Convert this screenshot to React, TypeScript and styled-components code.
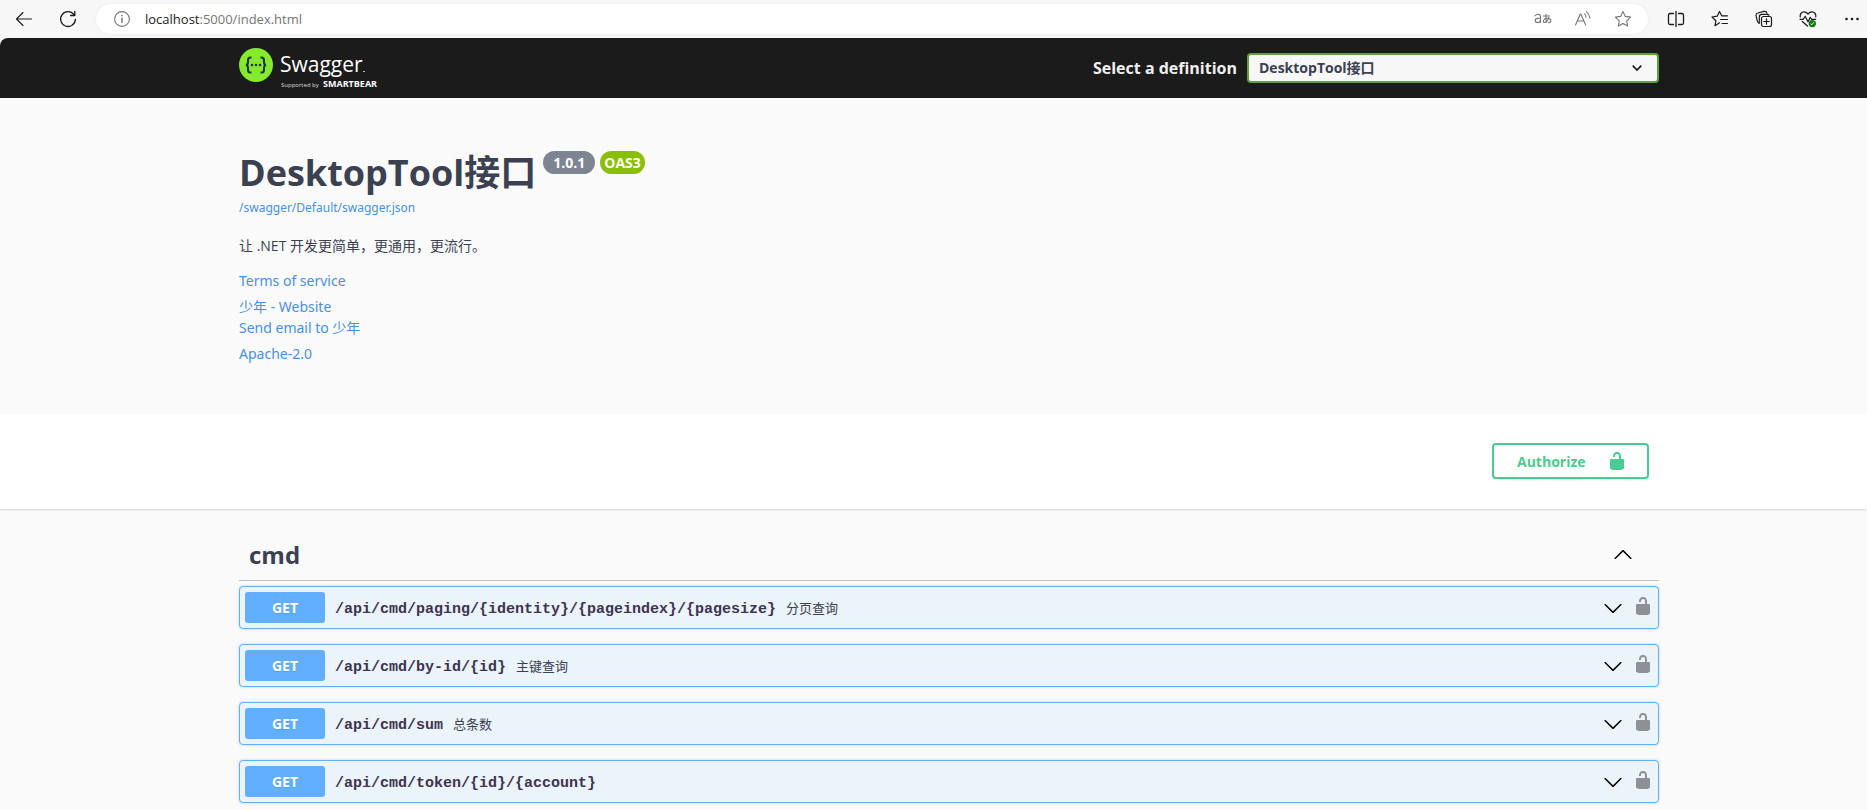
import React from 'react';
import styled, { createGlobalStyle } from 'styled-components';

const sans = `"Open Sans", "Noto Sans", "Noto Sans CJK SC", sans-serif`;
const wideSans = `"Noto Sans", "Noto Sans CJK SC", sans-serif`;
const mono = `"Liberation Mono", "Noto Sans CJK SC", monospace`;
const ink = '#3b4151';

const GlobalStyle = createGlobalStyle`
  *, *::before, *::after { box-sizing: border-box; }
  body { margin: 0; background: #fafafa; color: ${ink}; font-family: ${sans}; font-size: 14px; overflow-x: hidden; }
  a { color: #4990e2; text-decoration: none; }
  button, select, input { font: inherit; }
`;

/* Browser chrome */

const BrowserBar = styled.header`
  display: flex;
  align-items: center;
  height: 38px;
  padding: 0 3px 0 12px;
  background: #f7f7f7;
`;

const ToolButton = styled.button<{ $gap?: number }>`
  display: grid;
  place-items: center;
  flex: none;
  width: 24px;
  height: 24px;
  margin: 0 0 0 ${p => p.$gap ?? 20}px;
  padding: 0;
  border: 0;
  background: none;
  color: #1b1b1b;
`;

const AddressBar = styled.div`
  display: flex;
  align-items: center;
  flex: 1;
  min-width: 0;
  height: 30px;
  margin-left: 16px;
  padding: 0 13px 0 14px;
  border-radius: 15px;
  background: #fff;
  box-shadow: 0 0 3px rgba(0, 0, 0, 0.06);

  ${ToolButton} { color: #767676; }
`;

const Address = styled.div`
  flex: 1;
  margin-left: 11px;
  font-size: 13px;
  line-height: 20px;
  color: #767676;
  white-space: nowrap;
`;

const Host = styled.span`
  color: #1b1b1b;
`;

/* Page */

const Column = styled.div`
  display: grid;
  grid-template-columns: minmax(20px, 239fr) minmax(0, 1420px) minmax(20px, 208fr);

  & > * { grid-column: 2; }
`;

const TopbarBack = styled.div`
  background: #f7f7f7;
`;

const Topbar = styled(Column)`
  background: #1b1b1b;
  border-top-left-radius: 8px;
`;

const TopbarRow = styled.div`
  display: flex;
  align-items: center;
  justify-content: space-between;
  height: 60px;
`;

const LogoLink = styled.a`
  display: flex;
`;

const Definition = styled.label`
  display: flex;
  align-items: center;
  gap: 10px;
  color: #f0f0f0;
  font-size: 16px;
  font-weight: 700;
`;

const SelectBox = styled.span`
  display: grid;
  align-items: center;
  width: 412px;

  & > * { grid-area: 1 / 1; }
  svg { justify-self: end; margin-right: 15px; pointer-events: none; color: #1b1b1b; }
`;

const Select = styled.select`
  width: 100%;
  height: 30px;
  padding: 0 40px 2px 10px;
  border: 2px solid #62a03f;
  border-radius: 4px;
  background: #f7f7f7;
  color: ${ink};
  font-size: 14px;
  font-weight: 700;
  appearance: none;
`;

const Info = styled.div`
  display: flex;
  flex-direction: column;
  align-items: flex-start;
  padding: 50px 0 45px;
`;

const TitleRow = styled.div`
  display: flex;
  align-items: flex-start;
  gap: 5px;
`;

const Title = styled.h1`
  margin: 0 2px 0 0;
  font-size: 36px;
  line-height: 50px;
  font-weight: 700;
`;

const Badge = styled.span<{ $color: string; $pad: number }>`
  margin-top: 3px;
  padding: 0 ${p => p.$pad}px;
  border-radius: 12px;
  background: ${p => p.$color};
  color: #fff;
  font-size: 14px;
  line-height: 23px;
  font-weight: 700;
`;

const SpecLink = styled.a`
  font-family: ${wideSans};
  font-size: 12px;
  line-height: 19px;
`;

const Description = styled.p`
  margin: 18px 0 14px;
  line-height: 21px;
`;

const InfoLink = styled.a<{ $tight?: boolean }>`
  margin-bottom: ${p => (p.$tight ? 0 : 5)}px;
  font-family: ${wideSans};
  line-height: 21px;
`;

const Schemes = styled(Column)`
  background: #fff;
  box-shadow: 0 1px 2px rgba(0, 0, 0, 0.15);
`;

const SchemesRow = styled.div`
  display: flex;
  justify-content: flex-end;
  padding: 29px 10px 30px;
`;

const Authorize = styled.button`
  display: flex;
  align-items: center;
  justify-content: space-between;
  width: 157px;
  height: 36px;
  padding: 0 20px 0 23px;
  border: 2px solid #49cc90;
  border-radius: 4px;
  background: transparent;
  box-shadow: 0 1px 2px rgba(0, 0, 0, 0.1);
  color: #49cc90;
  font-size: 14px;
  font-weight: 700;
`;

const TagHead = styled.div`
  display: flex;
  align-items: center;
  justify-content: space-between;
  height: 52px;
  margin: 20px 0 5px;
  padding: 0 26px 0 10px;
  border-bottom: 1px solid rgba(59, 65, 81, 0.3);
`;

const TagName = styled.h2`
  margin: 0;
  font-size: 24px;
  line-height: 34px;
  font-weight: 700;
`;

const IconButton = styled.button`
  display: grid;
  place-items: center;
  padding: 0;
  border: 0;
  background: none;
  color: #000;
`;

const Operations = styled.ul`
  display: flex;
  flex-direction: column;
  gap: 15px;
  margin: 0;
  padding: 0 0 7px;
  list-style: none;
`;

const Operation = styled.li`
  display: flex;
  align-items: center;
  gap: 10px;
  height: 43px;
  padding: 0 5px;
  border: 1px solid #61affe;
  border-radius: 4px;
  background: #ebf3fb;
  box-shadow: 0 0 3px rgba(0, 0, 0, 0.19);
`;

const Method = styled.button`
  width: 80px;
  height: 31px;
  padding: 0;
  border: 0;
  border-radius: 3px;
  background: #61affe;
  color: #fff;
  font-size: 14px;
  font-weight: 700;
  text-shadow: 0 1px 0 rgba(0, 0, 0, 0.1);
`;

const Path = styled.a`
  padding-top: 4px;
  color: #3e3350;
  font-family: ${mono};
  font-size: 15px;
  line-height: 20px;
  font-weight: 700;
`;

const Summary = styled.span`
  flex: 1;
  font-size: 13px;
  line-height: 20px;
`;

const LockTint = styled(IconButton)`
  padding-bottom: 3px;
  color: #8d9196;
`;

/* Drawings */

const Line = ({ children, width = 1.1 }: { children: React.ReactNode; width?: number }) => (
  <svg width="18" height="18" viewBox="0 0 18 18" fill="none" stroke="currentColor" strokeWidth={width} strokeLinecap="round" strokeLinejoin="round" aria-hidden="true">
    {children}
  </svg>
);

const BackIcon = () => <Line><path d="M16.5 9H1.5M8 2.5 1.5 9 8 15.5" /></Line>;

const RefreshIcon = () => (
  <Line width={1.3}><path d="M16.4 9.4A7.4 7.4 0 1 1 15 4.7M15.8 1.3v4.2h-4.2" /></Line>
);

const InfoIcon = () => (
  <Line><circle cx="9" cy="9" r="7.4" /><path d="M9 8.2v4.3" strokeWidth="1.4" /><path d="M9 5.6v.2" strokeWidth="1.6" /></Line>
);

const TranslateIcon = () => (
  <Line width={1.1}>
    <path d="M1.2 5.7c.7-1 1.600-1.400 2.700-1.400 1.600 0 2.600.9 2.600 2.500v5.700M6.500 8l-2.900.4c-1.600.2-2.400 1-2.400 2.100 0 1.200.9 2 2.200 2 1.800 0 3.100-1.200 3.100-2.800" />
    <path d="M9.300 6h6.500M12 4.200c-.3 2.600-.2 5.800.6 8M14.800 7.500c-.8 2.600-2.600 5-4.400 5-1.900 0-1.300-4.200 2.700-4.200 4.800 0 4.800 3.800 1.300 4.400" />
  </Line>
);

const ReadAloudIcon = () => (
  <Line><path d="M1.500 15 6.400 4h.4l4.900 11M3.300 11h6.600M10.500 3.800c1 .9 1.500 2 1.600 3.300M12.400 1.600c2 1.600 3.200 3.700 3.400 6.300" /></Line>
);

const StarIcon = () => (
  <Line><path d="m9 1.500 2.350 4.900 5.250.7-3.850 3.700.95 5.300L9 13.600l-4.700 2.500.95-5.300L1.400 7.100l5.250-.7z" /></Line>
);

const SplitIcon = () => (
  <Line width={1.3}><path d="M9 1.500v15M6.500 3.500H3A1.500 1.500 0 0 0 1.500 5v8A1.500 1.500 0 0 0 3 14.500h3.500M11.500 3.500H15A1.500 1.500 0 0 1 16.500 5v8a1.500 1.500 0 0 1-1.500 1.500h-3.500" /></Line>
);

const FavoritesIcon = () => (
  <Line width={1.2}><path d="M8.600 12.800 4 15.700l.9-5L1 7l5.200-.8L8.500 1.500l2.200 4.300h5.800M11 9.500h5.500M9.500 9.500h1M11 13.500h5.500" /></Line>
);

const CollectionsIcon = () => (
  <Line width={1.2}>
    <rect x="6.500" y="6.500" width="10" height="10" rx="2" />
    <path d="M11.500 8.800v5.400M8.800 11.500h5.400M4.300 13.300C2.800 12.900 2.500 12 2.200 10.700L1.100 6.200C.7 4.500 1.200 3.400 2.900 3l6-1.600c1.600-.4 2.700.2 3.100 1.700M4.300 13.300V7c0-1.800.9-2.700 2.700-2.700h4.600c1.200 0 1.900.2 2.400.9" />
  </Line>
);

const HealthIcon = () => (
  <Line width={1.2}>
    <path d="M1.200 7C.8 3.800 2.700 1.900 5 1.900c1.700 0 3 .8 4 2.200 1-1.400 2.300-2.200 4-2.200 2.300 0 4.200 1.900 3.800 5.100M1 9.300h3.300l1.900-3.100 2.800 5.600 2.300-4.400 1.200 1.900h4.200M3.300 11.500 8.500 16" />
    <circle cx="13.300" cy="13.600" r="3.700" fill="#107c10" stroke="none" />
    <path d="m11.900 14 .8.8 2-2.200" stroke="#fff" strokeWidth="1" />
  </Line>
);

const MoreIcon = () => (
  <Line><g fill="currentColor" stroke="none"><circle cx="3.500" cy="9" r="1.300" /><circle cx="9" cy="9" r="1.300" /><circle cx="14.500" cy="9" r="1.300" /></g></Line>
);

const SelectChevron = () => (
  <svg width="14" height="14" viewBox="0 0 14 14" fill="none" stroke="currentColor" strokeWidth="1.700" aria-hidden="true">
    <path d="m2.700 4.700 4.300 4.300 4.300-4.300" />
  </svg>
);

const Chevron = ({ up }: { up?: boolean }) => (
  <svg width="20" height="20" viewBox="0 0 20 20" fill="currentColor" aria-hidden="true">
    <path
      transform={up ? 'rotate(180 10 10)' : undefined}
      d="M17.418 6.109c.272-.268.709-.268.979 0s.271.701 0 .969l-7.908 7.830c-.270.268-.707.268-.979 0l-7.908-7.830c-.270-.268-.271-.701 0-.969.271-.268.709-.268.979 0L10 13.250l7.418-7.141z"
    />
  </svg>
);

const Unlocked = () => (
  <svg width="20" height="20" viewBox="0 0 20 20" fill="currentColor" aria-hidden="true">
    <path d="M15.800 8H14V5.600C14 2.703 12.665 1 10 1 7.334 1 6 2.703 6 5.600V6h2v-.801C8 3.754 8.797 3 10 3c1.203 0 2 .754 2 2.199V8H4c-.553 0-1 .646-1 1.199V17c0 .549.428 1.139.951 1.307l1.197.387C5.672 18.861 6.550 19 7.100 19h5.800c.549 0 1.428-.139 1.951-.307l1.196-.387c.524-.167.953-.757.953-1.306V9.199C17 8.646 16.352 8 15.800 8z" />
  </svg>
);

const Logo = () => (
  <svg width="144" height="44" viewBox="0 0 144 44" role="img" aria-label="Swagger, supported by SmartBear">
    <circle cx="17" cy="19" r="17" fill="#85ea2d" />
    <g fill="none" stroke="#173647" strokeWidth="2">
      <path d="M12.500 11.500h-1c-1.800 0-2.500.8-2.500 2.500v2.200c0 1.800-.7 2.800-2.200 2.800 1.500 0 2.200 1 2.200 2.800V24c0 1.700.7 2.500 2.500 2.500h1" />
      <path d="M21.500 11.500h1c1.800 0 2.500.8 2.500 2.500v2.200c0 1.800.7 2.800 2.200 2.800-1.500 0-2.200 1-2.200 2.800V24c0 1.700-.7 2.500-2.500 2.500h-1" />
    </g>
    <g fill="#173647"><circle cx="13" cy="19" r="1.300" /><circle cx="17" cy="19" r="1.300" /><circle cx="21" cy="19" r="1.300" /></g>
    <g fill="#fff" fontFamily='"Open Sans", sans-serif'>
      <text x="41" y="26" fontSize="21" fontWeight="400">Swagger</text>
      <text x="42" y="41" fontSize="6" fill="#ddd">Supported by</text>
      <text x="84" y="41" fontSize="9" fontWeight="700">SMARTBEAR</text>
    </g>
    <path d="M124 25.500h2" stroke="#bbb" />
  </svg>
);

const operations = [
  { path: '/api/cmd/paging/{identity}/{pageindex}/{pagesize}', summary: '分页查询' },
  { path: '/api/cmd/by-id/{id}', summary: '主键查询' },
  { path: '/api/cmd/sum', summary: '总条数' },
  { path: '/api/cmd/token/{id}/{account}', summary: '' },
];

export default function App() {
  return (
    <>
      <GlobalStyle />
      <BrowserBar>
        <ToolButton $gap={0} aria-label="Back"><BackIcon /></ToolButton>
        <ToolButton aria-label="Refresh"><RefreshIcon /></ToolButton>
        <AddressBar>
          <ToolButton $gap={0} aria-label="Site information"><InfoIcon /></ToolButton>
          <Address><Host>localhost</Host>:5000/index.html</Address>
          <ToolButton aria-label="Translate"><TranslateIcon /></ToolButton>
          <ToolButton $gap={16} aria-label="Read aloud"><ReadAloudIcon /></ToolButton>
          <ToolButton $gap={16} aria-label="Add to favorites"><StarIcon /></ToolButton>
        </AddressBar>
        <ToolButton $gap={16} aria-label="Split screen"><SplitIcon /></ToolButton>
        <ToolButton aria-label="Favorites"><FavoritesIcon /></ToolButton>
        <ToolButton aria-label="Collections"><CollectionsIcon /></ToolButton>
        <ToolButton aria-label="Browser essentials"><HealthIcon /></ToolButton>
        <ToolButton aria-label="Settings and more"><MoreIcon /></ToolButton>
      </BrowserBar>

      <TopbarBack>
        <Topbar>
          <TopbarRow>
            <LogoLink href="#top"><Logo /></LogoLink>
            <Definition>
              Select a definition
              <SelectBox>
                <Select defaultValue="desktop"><option value="desktop">DesktopTool接口</option></Select>
                <SelectChevron />
              </SelectBox>
            </Definition>
          </TopbarRow>
        </Topbar>
      </TopbarBack>

      <main>
        <Column>
          <Info>
            <TitleRow>
              <Title>DesktopTool接口</Title>
              <Badge $color="#7d8492" $pad={10}>1.0.1</Badge>
              <Badge $color="#89bf04" $pad={4}>OAS3</Badge>
            </TitleRow>
            <SpecLink href="#spec">/swagger/Default/swagger.json</SpecLink>
            <Description>让 .NET 开发更简单，更通用，更流行。</Description>
            <InfoLink href="#terms">Terms of service</InfoLink>
            <InfoLink href="#website" $tight>少年 - Website</InfoLink>
            <InfoLink href="#email">Send email to 少年</InfoLink>
            <InfoLink href="#license">Apache-2.0</InfoLink>
          </Info>
        </Column>

        <Schemes>
          <SchemesRow>
            <Authorize>Authorize<Unlocked /></Authorize>
          </SchemesRow>
        </Schemes>

        <Column>
          <section>
            <TagHead>
              <TagName>cmd</TagName>
              <IconButton aria-label="Collapse operations"><Chevron up /></IconButton>
            </TagHead>
            <Operations>
              {operations.map(op => (
                <Operation key={op.path}>
                  <Method>GET</Method>
                  <Path href={`#${op.path}`}>{op.path}</Path>
                  <Summary>{op.summary}</Summary>
                  <IconButton aria-label="Expand operation"><Chevron /></IconButton>
                  <LockTint aria-label="Authorization"><Unlocked /></LockTint>
                </Operation>
              ))}
            </Operations>
          </section>
        </Column>
      </main>
    </>
  );
}
